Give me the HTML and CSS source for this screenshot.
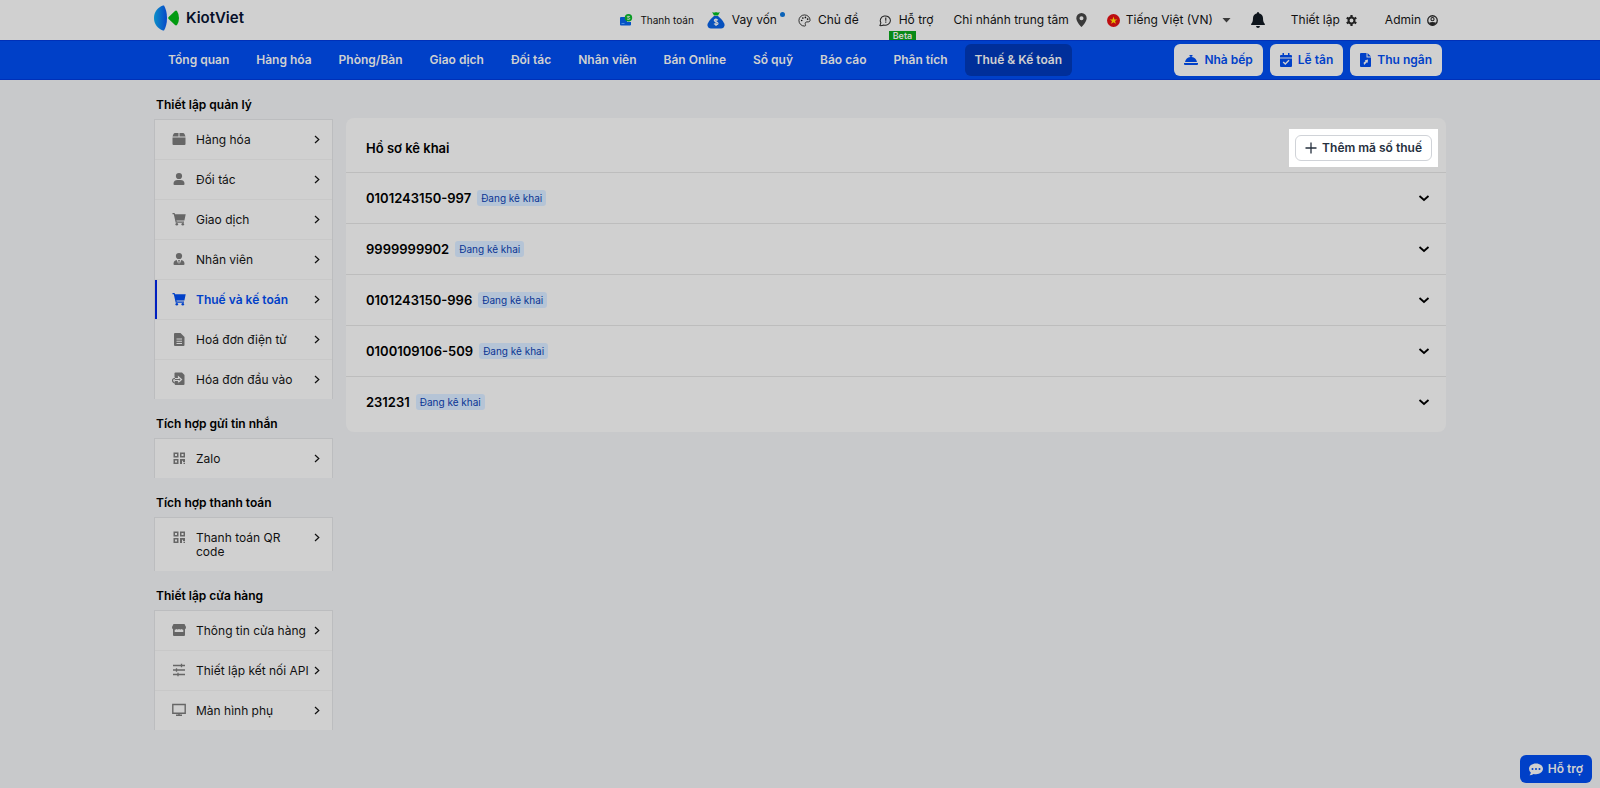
FILE: index.html
```html
<!DOCTYPE html>
<html lang="vi">

<head>
    <meta charset="UTF-8">
    <meta name="viewport" content="width=device-width, initial-scale=1.0">
    <title>KiotViet - Thuế và kế toán</title>
    <link rel="stylesheet" href="styles.css">
</head>

<body>
    <!-- Shared icons -->
    <svg class="sprite" aria-hidden="true">
        <symbol id="i-chevron" viewBox="0 0 10 10">
            <path d="M3 1.5 6.8 5 3 8.5" fill="none" stroke="currentColor" stroke-width="1.2" />
        </symbol>
        <symbol id="i-down" viewBox="0 0 12 12">
            <path d="M1.500 4 6 8l4.500-4" fill="none" stroke="currentColor" stroke-width="1.8" />
        </symbol>
        <symbol id="i-cart" viewBox="0 0 14 14">
            <path d="M.5 1h2.1l.4 1.200h10.700l-1.300 6.200H4.400l.3 1.100h7.300v1.200H3.700L1.800 2.200H.5z" />
            <circle cx="4.8" cy="12.2" r="1.3" />
            <circle cx="10.8" cy="12.2" r="1.3" />
        </symbol>
        <symbol id="i-qr" viewBox="0 0 14 14">
            <path fill-rule="evenodd" d="M1.5 1.5h5v5h-5zM3 3v2h2V3zM8 1.5h5v5H8zM9.500 3v2h2V3zM1.500 8h5v5h-5zM3 9.500v2h2v-2zM8 8h5v3h-2V9.800h-1V13H8zM11.500 11.800H13V13h-1.500z" />
        </symbol>
    </svg>

    <header>
        <div class="container topbar">
            <a class="logo" href="#">
                <svg width="26" height="26" viewBox="0 0 26 26">
                    <defs>
                        <linearGradient id="logo-blue">
                            <stop offset="0" stop-color="#0b8fc8" />
                            <stop offset="1" stop-color="#0848c8" />
                        </linearGradient>
                    </defs>
                    <path d="M9 .5h1q3 5.200 3 12.500T10 25.500H9C3.500 23.500 0 19 0 13S3.500 2.500 9 .5z" fill="url(#logo-blue)" />
                    <path d="M14.600 12 21 6q1-.8 2 0 2 3 2 7t-2 7q-1 .8-2 0l-6.400-6q-1-1 0-2z" fill="#009a10" />
                </svg>
                KiotViet
            </a>
            <div class="tools">
                <div class="tool-group">
                    <a class="tool tool-small" href="#">
                        <svg width="14" height="14" viewBox="0 0 14 14">
                            <path d="M2 4h6v5h4v2.500q0 1-1 1H2q-1 0-1-1V5q0-1 1-1z" fill="#0653c5" />
                            <path d="M2.500 10h3v1h-3z" fill="#4a8ee0" />
                            <circle cx="9.500" cy="4.800" r="3.700" fill="#0a9a24" />
                            <path d="M10.800 3.600q-2.600-.8-2.600.2c0 1 2.600.8 2.600 1.900 0 .9-1.800.9-2.700.3" fill="none" stroke="#d0d0d0" stroke-width=".9" />
                        </svg>
                        Thanh toán
                    </a>
                    <a class="tool" href="#">
                        <svg width="18" height="18" viewBox="0 0 18 18">
                            <path d="M5 1q2 1 4 0 2 1 4 0l-2 3.500H7z" fill="#009c1c" />
                            <path d="M7 5h4q7 6 6.500 9.500-.5 3-3.500 3H4q-3 0-3.500-3Q0 11 7 5z" fill="#0751bd" />
                            <path d="M11 9q-3.500-1.300-3.700.3C7.200 11 11 10.400 11 12.400c0 1.600-3 1.300-4 .3M9 7.500V15" fill="none" stroke="#d0d0d0" stroke-width="1.200" />
                        </svg>
                        <span class="dotted">Vay vốn</span>
                    </a>
                    <a class="tool" href="#">
                        <svg width="13" height="13" viewBox="0 0 14 14">
                            <path d="M7 1a6 6 0 1 0 0 12c1.200 0 1.400-.8 1-1.600C7.300 10 8 8.500 9.500 8.500H11c1.300 0 2-.8 2-1.800C13 3.500 10.300 1 7 1z" fill="none" stroke="#222" />
                            <circle cx="4" cy="7" r=".9" />
                            <circle cx="5.200" cy="4.300" r=".9" />
                            <circle cx="8" cy="3.700" r=".9" />
                            <circle cx="10.400" cy="5.500" r=".9" />
                        </svg>
                        Chủ đề
                    </a>
                </div>
                <div class="tool-group wide">
                    <a class="tool support" href="#">
                        <svg width="13" height="13" viewBox="0 0 14 14">
                            <path d="M1 12.500 2 9.500A5.500 5 0 1 1 5 11.800q-2 .9-4 .7z" fill="none" stroke="#222" stroke-width="1.100" />
                            <path d="M7.300 3.800v3.400M7.300 8.200v1.200" stroke="#222" stroke-width="1.200" />
                        </svg>
                        Hỗ trợ
                        <span class="beta">Beta</span>
                    </a>
                    <a class="tool" href="#">
                        Chi nhánh trung tâm
                        <svg width="11" height="14" viewBox="0 0 11 14">
                            <path fill="#3a3a3a" fill-rule="evenodd" d="M5.500 0a5.200 5.200 0 0 1 5.200 5.200C10.700 8 7.500 12 5.500 14 3.500 12 .3 8 .3 5.200A5.200 5.200 0 0 1 5.500 0zm0 3.200a2 2 0 1 0 0 4 2 2 0 0 0 0-4z" />
                        </svg>
                    </a>
                    <a class="tool language" href="#">
                        <svg width="13" height="13" viewBox="0 0 14 14">
                            <circle cx="7" cy="7" r="7" fill="#bd0d10" />
                            <path d="m7 2.800 1 3h3.100L8.600 7.600l1 3L7 8.800l-2.600 1.800 1-3-2.500-1.800H6z" fill="#e0bd00" />
                        </svg>
                        Tiếng Việt (VN)
                        <svg class="caret" width="9" height="5" viewBox="0 0 9 5">
                            <path d="M.5 0h8l-4 4.500z" fill="#3a3a3a" />
                        </svg>
                    </a>
                    <button class="tool" type="button" aria-label="Thông báo">
                        <svg width="14" height="16" viewBox="0 0 14 16">
                            <path d="M7 0q1 0 1 1.200c2.500.6 4 2.500 4 4.800 0 3 .5 4.500 1.700 5.800q.6 1.200-.6 1.200H.9q-1.200 0-.6-1.200C1.500 10.500 2 9 2 6c0-2.300 1.500-4.200 4-4.800Q6 0 7 0zM5 14h4q-.3 2-2 2t-2-2z" fill="#0e151c" />
                        </svg>
                    </button>
                </div>
                <div class="tool-group widest">
                    <a class="tool" href="#">
                        Thiết lập
                        <svg width="11" height="11" viewBox="0 0 12 12">
                            <circle cx="6" cy="6" r="3.200" fill="none" stroke="#222" stroke-width="2.200" />
                            <path d="M6 0v2.500M6 9.500V12M.8 3 3 4.250M9 7.750 11.200 9M.8 9 3 7.750M9 4.250 11.200 3" stroke="#222" stroke-width="2.400" />
                        </svg>
                    </a>
                    <a class="tool" href="#">
                        Admin
                        <svg width="11" height="11" viewBox="0 0 12 12">
                            <circle cx="6" cy="6" r="5.200" fill="none" stroke="#222" stroke-width="1.400" />
                            <circle cx="6" cy="4.500" r="1.700" fill="none" stroke="#222" stroke-width="1.200" />
                            <path d="M2 8.500q4-2 8 0-1.500 3-4 3T2 8.500z" fill="#222" />
                        </svg>
                    </a>
                </div>
            </div>
        </div>
    </header>

    <nav>
        <div class="container navbar">
            <div class="menu">
                <a href="#">Tổng quan</a>
                <a href="#">Hàng hóa</a>
                <a href="#">Phòng/Bàn</a>
                <a href="#">Giao dịch</a>
                <a href="#">Đối tác</a>
                <a href="#">Nhân viên</a>
                <a href="#">Bán Online</a>
                <a href="#">Sổ quỹ</a>
                <a href="#">Báo cáo</a>
                <a href="#">Phân tích</a>
                <a class="active" href="#">Thuế &amp; Kế toán</a>
            </div>
            <div class="shortcuts">
                <a href="#">
                    <svg width="14" height="12" viewBox="0 0 14 12">
                        <path d="M5.500 1h3v1.200h-.8v.7Q12 3.500 13 8H1q1-4.500 5.300-5.100v-.7h-.8zM0 9h14v1q0 1-1 1H1q-1 0-1-1z" />
                    </svg>
                    Nhà bếp
                </a>
                <a href="#">
                    <svg width="12" height="14" viewBox="0 0 12 14">
                        <path fill-rule="evenodd" d="M2.500 0H4v2h4V0h1.500v2H11q1 0 1 1v1.500H0V3q0-1 1-1h1.500zM0 5.500h12V13q0 1-1 1H1q-1 0-1-1zm8.500 1.300L5.300 10 3.700 8.500l-1 1L5.300 12l4.200-4.200z" />
                    </svg>
                    Lễ tân
                </a>
                <a href="#">
                    <svg width="11" height="14" viewBox="0 0 11 14">
                        <path fill-rule="evenodd" d="M1 0h5.500v4.500H11V13q0 1-1 1H1q-1 0-1-1V1q0-1 1-1zm6.500 0L11 3.500H7.500zM8 6.500 4.800 7.200l.8.800-2 1.800.5 2.200 2.800-2.800.7.700z" />
                    </svg>
                    Thu ngân
                </a>
            </div>
        </div>
    </nav>

    <div class="container layout">
        <aside>
            <h2>Thiết lập quản lý</h2>
            <ul>
                <li><a href="#">
                    <svg class="icon" viewBox="0 0 14 14"><path d="M3 1h3.500v3.500h-6L1.500 2Q2 1 3 1zm4.500 0H11q1 0 1.500 1l1 2.500h-6zM.5 5.500h13V12q0 1-1 1h-11q-1 0-1-1z" /></svg>
                    <span>Hàng hóa</span>
                    <svg class="chevron"><use href="#i-chevron" /></svg>
                </a></li>
                <li><a href="#">
                    <svg class="icon" viewBox="0 0 14 14"><circle cx="7" cy="4" r="3.100" /><path d="M1.500 12q0-4 4-4h3q4 0 4 4 0 1-1 1h-9q-1 0-1-1z" /></svg>
                    <span>Đối tác</span>
                    <svg class="chevron"><use href="#i-chevron" /></svg>
                </a></li>
                <li><a href="#">
                    <svg class="icon"><use href="#i-cart" /></svg>
                    <span>Giao dịch</span>
                    <svg class="chevron"><use href="#i-chevron" /></svg>
                </a></li>
                <li><a href="#">
                    <svg class="icon" viewBox="0 0 14 14"><circle cx="7" cy="4" r="3.100" /><path d="M1.500 12q0-3.500 3.200-4L6.300 12 6.600 9.500 6 8h2l-.6 1.500.3 2.500L9.300 8q3.200.5 3.200 4 0 1-1 1h-9q-1 0-1-1z" /></svg>
                    <span>Nhân viên</span>
                    <svg class="chevron"><use href="#i-chevron" /></svg>
                </a></li>
                <li class="active"><a href="#">
                    <svg class="icon"><use href="#i-cart" /></svg>
                    <span>Thuế và kế toán</span>
                    <svg class="chevron"><use href="#i-chevron" /></svg>
                </a></li>
                <li><a href="#">
                    <svg class="icon" viewBox="0 0 14 14"><path fill-rule="evenodd" d="M3 1h5.500l4 4v8q0 1-1 1H3q-1 0-1-1V2q0-1 1-1zm1.500 5.500v1H10v-1zm0 2.200v1H10v-1zm0 2.200v1H10v-1z" /></svg>
                    <span>Hoá đơn điện tử</span>
                    <svg class="chevron"><use href="#i-chevron" /></svg>
                </a></li>
                <li><a href="#">
                    <svg class="icon" viewBox="0 0 14 14"><path d="M4 .5h6l2.500 2.500v9q0 1-1 1H3.500q-1 0-1-1V1.500q0-1 1-1z" /><path d="M0 5h2.500v8H0z" fill="#d0d0d0" /><path d="M2.500 6.500h4V4.800L9.500 7.500l-3 2.800V8.500h-4" fill="none" stroke="#d0d0d0" stroke-width="1.200" /><path d="M3 6.500H2q-1.500.5-1.500 2T2.500 11H8" fill="none" stroke="currentColor" stroke-width="1.200" /></svg>
                    <span>Hóa đơn đầu vào</span>
                    <svg class="chevron"><use href="#i-chevron" /></svg>
                </a></li>
            </ul>

            <h2>Tích hợp gửi tin nhắn</h2>
            <ul>
                <li><a href="#">
                    <svg class="icon"><use href="#i-qr" /></svg>
                    <span>Zalo</span>
                    <svg class="chevron"><use href="#i-chevron" /></svg>
                </a></li>
            </ul>

            <h2>Tích hợp thanh toán</h2>
            <ul>
                <li><a href="#">
                    <svg class="icon"><use href="#i-qr" /></svg>
                    <span>Thanh toán QR code</span>
                    <svg class="chevron"><use href="#i-chevron" /></svg>
                </a></li>
            </ul>

            <h2>Thiết lập cửa hàng</h2>
            <ul>
                <li><a href="#">
                    <svg class="icon" viewBox="0 0 14 14"><path fill-rule="evenodd" d="M1.500 1h11L14 4q0 2-1 2.200V12q0 1-1 1H2q-1 0-1-1V6.200Q0 6 0 4zm1.200 5.700V9h8.600V6.700q-1.300 0-2-.8-1 1-2.300.2-1.300.8-2.300-.2-.7.800-2 .8z" /></svg>
                    <span>Thông tin cửa hàng</span>
                    <svg class="chevron"><use href="#i-chevron" /></svg>
                </a></li>
                <li><a href="#">
                    <svg class="icon" viewBox="0 0 14 14"><path d="M1 2.500h12M1 7h12M1 11.500h12M9.500.8v3.400M4.500 5.300v3.400M6 9.800v3.400" fill="none" stroke="currentColor" stroke-width="1.300" /></svg>
                    <span>Thiết lập kết nối API</span>
                    <svg class="chevron"><use href="#i-chevron" /></svg>
                </a></li>
                <li><a href="#">
                    <svg class="icon" viewBox="0 0 14 14"><path d="M.8 1.500h12.400v8.800H.8zM4 12.300h6M7 10.300v2" fill="none" stroke="currentColor" stroke-width="1.400" /></svg>
                    <span>Màn hình phụ</span>
                    <svg class="chevron"><use href="#i-chevron" /></svg>
                </a></li>
            </ul>
        </aside>

        <main>
            <div class="card-header">
                <h1>Hồ sơ kê khai</h1>
                <div class="spotlight">
                    <button class="add-button" type="button">
                        <svg width="12" height="12" viewBox="0 0 12 12">
                            <path d="M6 .5v11M.5 6h11" stroke="currentColor" stroke-width="1.300" />
                        </svg>
                        Thêm mã số thuế
                    </button>
                </div>
            </div>
            <button class="tax-row" type="button">
                <strong>0101243150-997</strong>
                <span class="badge">Đang kê khai</span>
                <svg class="down"><use href="#i-down" /></svg>
            </button>
            <button class="tax-row" type="button">
                <strong>9999999902</strong>
                <span class="badge">Đang kê khai</span>
                <svg class="down"><use href="#i-down" /></svg>
            </button>
            <button class="tax-row" type="button">
                <strong>0101243150-996</strong>
                <span class="badge">Đang kê khai</span>
                <svg class="down"><use href="#i-down" /></svg>
            </button>
            <button class="tax-row" type="button">
                <strong>0100109106-509</strong>
                <span class="badge">Đang kê khai</span>
                <svg class="down"><use href="#i-down" /></svg>
            </button>
            <button class="tax-row" type="button">
                <strong>231231</strong>
                <span class="badge">Đang kê khai</span>
                <svg class="down"><use href="#i-down" /></svg>
            </button>
        </main>
    </div>

    <button class="chat-button" type="button">
        <svg width="14" height="13" viewBox="0 0 14 13">
            <path fill-rule="evenodd" d="M7 .5c4 0 7 2.300 7 5.300s-3 5.400-7 5.400q-1.300 0-2.400-.3-1.800 1.400-4.100 1.400 1.200-1.200 1.300-2.700Q0 8 0 5.800C0 2.800 3 .5 7 .5zM3.500 5a1 1 0 1 0 0 2 1 1 0 0 0 0-2zM7 5a1 1 0 1 0 0 2 1 1 0 0 0 0-2zm3.500 0a1 1 0 1 0 0 2 1 1 0 0 0 0-2z" />
        </svg>
        Hỗ trợ
    </button>
</body>

</html>
```
FILE: styles.css
```css
* {
    box-sizing: border-box;
}

body {
    margin: 0;
    min-height: 100vh;
    font-family: Inter, "Liberation Sans", sans-serif;
    font-size: 12px;
    line-height: 16px;
    color: #111;
    background-color: #c8c9cb;
}

a {
    color: inherit;
    text-decoration: none;
}

button {
    font: inherit;
    color: inherit;
    cursor: pointer;
}

svg {
    flex: none;
    fill: currentColor;
}

.sprite {
    display: none;
}

.container {
    max-width: 1292px;
    margin: 0 auto;
}

/* Top bar */
header {
    background-color: #d0d0d0;
}

.topbar {
    height: 40px;
    display: flex;
    align-items: center;
    justify-content: space-between;
    padding-right: 8px;
}

.logo {
    display: flex;
    align-items: center;
    gap: 6px;
    font-size: 15px;
    font-weight: 600;
    color: #06102a;
    padding-bottom: 4px;
}

.tools,
.tool-group,
.tool {
    display: flex;
    align-items: center;
}

.tools {
    gap: 20px;
}

.tool-group {
    gap: 13px;
}

.tool-group.wide {
    gap: 20px;
}

.tool-group.widest {
    gap: 28px;
    padding-left: 6px;
}

.tool {
    gap: 7px;
    padding: 0;
    border: none;
    background: none;
    white-space: nowrap;
}

.tool-small {
    font-size: 10px;
}

.language {
    gap: 6px;
}

.caret {
    margin-left: 3px;
}

.widest .tool {
    gap: 6px;
}

.dotted {
    position: relative;
    padding-right: 8px;
}

.dotted::after {
    content: "";
    position: absolute;
    top: 0;
    right: 0;
    width: 5px;
    height: 5px;
    border-radius: 50%;
    background-color: #0a62b8;
}

.support {
    position: relative;
}

.beta {
    position: absolute;
    left: 10px;
    top: 19px;
    padding: 0 4px;
    font-size: 9px;
    font-weight: 600;
    line-height: 9px;
    color: #d0d0d0;
    background-color: #088a17;
}

/* Main navigation */
nav {
    background-color: #0040c8;
    border-top: 1px solid #0030b8;
    border-bottom: 1px solid #0030b8;
}

.navbar {
    display: flex;
    align-items: center;
    justify-content: space-between;
    height: 38px;
    padding: 0 4px;
    font-weight: 600;
    white-space: nowrap;
}

.menu,
.shortcuts {
    display: flex;
    gap: 7px;
}

.menu a {
    padding: 8px 10px;
    border-radius: 6px;
    color: #d0d0d0;
}

.menu .active {
    background-color: #002f9a;
}

.shortcuts a {
    display: flex;
    align-items: center;
    gap: 6px;
    padding: 8px 10px;
    border-radius: 6px;
    background-color: #d0d0d0;
    color: #0040c8;
}

/* Settings sidebar */
.layout {
    display: grid;
    grid-template-columns: 179px 1fr;
    gap: 13px;
    align-items: start;
}

aside h2 {
    margin: 0;
    padding: 15px 2px 4px;
    font-size: 12px;
    font-weight: 600;
    line-height: 20px;
    color: #000;
}

aside ul {
    margin: 0;
    padding: 0;
    list-style: none;
    border: 1px solid #bcbdbf;
    border-bottom: none;
    background-color: #d0d0d0;
}

aside li + li {
    border-top: 1px solid #c8c8c8;
}

aside li a {
    display: flex;
    align-items: flex-start;
    padding: 12px 10px 12px 17px;
    line-height: 14px;
}

aside li span {
    flex: 1;
    margin-left: 10px;
    padding-top: 1px;
}

.icon {
    width: 14px;
    height: 14px;
    color: #666;
}

.chevron {
    width: 10px;
    height: 15px;
}

aside .active {
    box-shadow: inset 2px 0 #0020c0;
}

aside .active span {
    font-weight: 600;
    color: #0040c8;
}

aside .active .icon {
    color: #0040c8;
}

/* Tax profiles */
main {
    margin-top: 38px;
    padding-bottom: 5px;
    border-radius: 8px;
    color: #000;
    background-color: #d0d0d0;
}

.card-header {
    display: flex;
    align-items: center;
    justify-content: space-between;
    padding: 11px 8px 5px 20px;
}

h1 {
    margin: 0;
    font-size: 13px;
    font-weight: 600;
}

.spotlight {
    padding: 6px;
    background-color: #fff;
}

.add-button {
    display: flex;
    align-items: center;
    gap: 5px;
    padding: 4px 9px;
    border: 1px solid #d0d3d8;
    border-radius: 6px;
    background-color: #fff;
    color: #26303e;
    font-weight: 600;
}

.tax-row {
    display: flex;
    align-items: center;
    gap: 6px;
    width: 100%;
    padding: 17px 16px 17px 20px;
    border: none;
    border-top: 1px solid #bdbdbd;
    background: none;
}

.tax-row strong {
    font-size: 13px;
    font-weight: 600;
}

.badge {
    padding: 0 4px;
    border-radius: 3px;
    background-color: #b5c4d6;
    color: #0a3594;
    font-size: 10px;
}

.down {
    width: 12px;
    height: 12px;
    margin-left: auto;
}

.chat-button {
    position: fixed;
    right: 8px;
    bottom: 5px;
    display: flex;
    align-items: center;
    gap: 5px;
    padding: 6px 9px;
    border: none;
    border-radius: 6px;
    background-color: #0040c8;
    color: #d0d0d0;
    font-weight: 600;
}
```
